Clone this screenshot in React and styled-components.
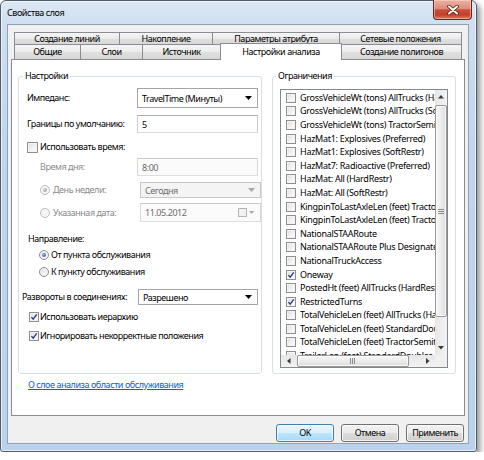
import React from 'react';
import styled, { createGlobalStyle } from 'styled-components';

const Global = createGlobalStyle`
  html, body { margin: 0; padding: 0; background: #fff; }
  body { font-family: "Noto Sans", sans-serif; font-size: 9px; letter-spacing: -0.45px; color: #000; }
`;

const Window = styled.div`
  box-sizing: border-box;
  width: 477px;
  height: 452px;
  border: 1px solid #4f5d6e;
  border-radius: 6px 6px 3px 3px;
  background: linear-gradient(180deg, #dde8f4 0px, #d0def0 24px, #c2d6ed 140px, #bcd2eb 100%);
  box-shadow: inset 0 0 0 1px rgba(255, 255, 255, 0.6), 3px 4px 6px rgba(0, 0, 0, 0.45);
  display: flex;
  flex-direction: column;
  padding: 0 7px 7px 6px;
`;

const TitleBar = styled.div`
  height: 23px;
  display: flex;
  align-items: flex-start;
  justify-content: space-between;
  flex: none;
`;

const Title = styled.div`
  margin-top: 6px;
  line-height: 12px;
  color: #000;
`;

const CloseBtn = styled.div`
  box-sizing: border-box;
  width: 39px;
  height: 20px;
  margin-top: -1px;
  margin-right: -3px;
  border: 1px solid #6a2316;
  border-top: none;
  border-radius: 0 0 4px 4px;
  background: linear-gradient(180deg, #eab2a5 0%, #dc8d7b 45%, #c8503b 52%, #c23f2a 78%, #de7b62 100%);
  box-shadow: inset 0 0 0 1px rgba(255, 220, 210, 0.5);
  display: flex;
  align-items: center;
  justify-content: center;
`;

const Client = styled.div`
  flex: 1;
  border: 1px solid #8ea3bb;
  background: #f0f0f0;
  padding: 7px 3px 0 3px;
  display: flex;
  flex-direction: column;
`;

const Tabs = styled.div`
  margin: 0 3px;
  display: flex;
  flex-direction: column;
`;

const TabRow = styled.div`
  display: flex;
  height: ${p => p.$h}px;
`;

const Tab = styled.div`
  box-sizing: border-box;
  position: relative;
  flex: none;
  width: ${p => p.$w}px;
  height: ${p => (p.$sel ? p.$h + 2 : p.$h)}px;
  margin-top: ${p => (p.$sel ? -1 : 0)}px;
  margin-left: ${p => (p.$first ? 0 : -1)}px;
  border: 1px solid #898c95;
  border-bottom: none;
  z-index: ${p => (p.$sel ? 2 : 1)};
  background: ${p => (p.$sel ? '#fff' : 'linear-gradient(180deg, #f5f5f5 0%, #ebebeb 50%, #dfdfdf 51%, #d8d8d8 100%)')};
  display: flex;
  align-items: center;
  justify-content: center;
  white-space: nowrap;
  line-height: 12px;
`;

const Panel = styled.div`
  box-sizing: border-box;
  height: 357px;
  flex: none;
  border: 1px solid #898c95;
  background: #fff;
  padding: 10px 0 0 6px;
  display: flex;
  flex-direction: column;
`;

const Groups = styled.div`
  display: flex;
  gap: 10px;
`;

const Fieldset = styled.fieldset`
  box-sizing: border-box;
  margin: 0;
  min-width: 0;
  width: ${p => p.$w}px;
  height: 304px;
  border: 1px solid #d5dfe5;
  border-radius: 3px;
  padding: ${p => p.$pad};
  display: flex;
  flex-direction: column;
`;

const Legend = styled.legend`
  padding: 0 2px;
  margin-left: -4px;
  line-height: 12px;
`;

const FormRow = styled.div`
  display: flex;
  align-items: center;
  flex: none;
  height: ${p => p.$h}px;
  margin-top: ${p => p.$mt}px;
  margin-left: ${p => p.$ml || 0}px;
  white-space: nowrap;
`;

const FieldLabel = styled.span`
  flex: none;
  width: ${p => p.$w}px;
  margin-left: ${p => p.$ml || 0}px;
  color: ${p => (p.$disabled ? '#8a8a8a' : '#000')};
  line-height: 12px;
`;

const Text = styled.span`
  color: ${p => (p.$disabled ? '#8a8a8a' : '#000')};
  margin-left: ${p => p.$ml || 0}px;
  line-height: 12px;
`;

const TextBox = styled.div`
  box-sizing: border-box;
  flex: none;
  width: ${p => p.$w || 121}px;
  height: 100%;
  border: 1px solid;
  border-color: ${p => (p.$disabled ? '#c9c9c9 #d9d9d9 #dedede #d9d9d9' : '#abadb3 #c9ccd2 #d6dae0 #c9ccd2')};
  background: ${p => (p.$disabled ? '#fbfbfb' : '#fff')};
  color: ${p => (p.$disabled ? '#6d6d6d' : '#000')};
  padding: 0 5px 0 4px;
  display: flex;
  align-items: center;
  justify-content: space-between;
`;

const SelectBox = styled.div`
  box-sizing: border-box;
  flex: none;
  width: ${p => p.$w || 121}px;
  height: 100%;
  border: 1px solid ${p => (p.$disabled ? '#c8c8c8' : '#a5a5a5')};
  background: ${p => (p.$disabled ? '#f4f4f4' : '#fff')};
  color: ${p => (p.$disabled ? '#6d6d6d' : '#000')};
  padding: 0 5px 0 4px;
  display: flex;
  align-items: center;
  justify-content: space-between;
`;

const BoxMark = styled.span`
  box-sizing: border-box;
  flex: none;
  width: ${p => p.$s}px;
  height: ${p => p.$s}px;
  border: 1px solid ${p => (p.$disabled ? '#bcbcbc' : '#8f8f8f')};
  border-radius: ${p => (p.$round ? '50%' : '0')};
  background: ${p => (p.$disabled ? '#f4f4f4' : 'linear-gradient(135deg, #dcdcdc 0%, #f2f2f2 55%, #ffffff 100%)')};
  box-shadow: inset 0 0 0 1px ${p => (p.$disabled ? '#f7f7f7' : '#f3f3f3')};
  display: flex;
  align-items: center;
  justify-content: center;
`;

const Dot = styled.span`
  width: 4px;
  height: 4px;
  border-radius: 50%;
  background: ${p => (p.$disabled ? 'radial-gradient(circle at 35% 35%, #d0d0d0, #9a9a9a)' : 'radial-gradient(circle at 35% 35%, #8ab4ea, #1d4d96)')};
`;

const LinkText = styled.a`
  margin: 5px 0 0 10px;
  line-height: 12px;
  color: #0066cc;
  text-decoration: underline;
  align-self: flex-start;
`;

const ListBox = styled.div`
  box-sizing: border-box;
  width: 168px;
  height: 279px;
  border: 1px solid #828790;
  background: #fff;
  display: grid;
  grid-template-columns: 154px 12px;
  grid-template-rows: 265px 12px;
  overflow: hidden;
`;

const Items = styled.div`
  overflow: hidden;
  padding-top: 1px;
  letter-spacing: -0.28px;
`;

const Item = styled.div`
  display: flex;
  align-items: center;
  height: 13.6px;
  padding-left: 5px;
  gap: 4px;
  white-space: nowrap;
  line-height: 12px;
`;

const VScroll = styled.div`
  display: flex;
  flex-direction: column;
  background: linear-gradient(90deg, #e6e6e6, #f3f3f3);
`;

const HScroll = styled.div`
  display: flex;
  background: linear-gradient(180deg, #e6e6e6, #f3f3f3);
`;

const Corner = styled.div`
  background: #f0f0f0;
`;

const Arrow = styled.div`
  flex: none;
  width: ${p => p.$w}px;
  height: ${p => p.$h}px;
  display: flex;
  align-items: center;
  justify-content: center;
`;

const Thumb = styled.div`
  box-sizing: border-box;
  flex: none;
  width: ${p => (p.$vert ? 'auto' : `${p.$len}px`)};
  height: ${p => (p.$vert ? `${p.$len}px` : 'auto')};
  margin: ${p => (p.$vert ? '1px 0 0 0' : '0 0 0 1px')};
  border: 1px solid #979797;
  border-radius: 2px;
  background: ${p => (p.$vert ? 'linear-gradient(90deg, #f7f7f7 0%, #ececec 50%, #dcdcdc 100%)' : 'linear-gradient(180deg, #f7f7f7 0%, #ececec 50%, #dcdcdc 100%)')};
  box-shadow: inset 0 0 0 1px rgba(255, 255, 255, 0.8);
  display: flex;
  align-items: center;
  justify-content: center;
`;

const Track = styled.div`
  flex: 1;
`;

const Buttons = styled.div`
  margin-top: 8px;
  padding-right: 1px;
  display: flex;
  justify-content: flex-end;
  gap: 7px;
`;

const Button = styled.div`
  box-sizing: border-box;
  width: ${p => p.$w}px;
  height: 18px;
  border: 1px solid ${p => (p.$default ? '#3c7fb1' : '#707070')};
  border-radius: 3px;
  background: ${p => (p.$default
    ? 'linear-gradient(180deg, #eaf6fd 0%, #d9f0fc 50%, #bee6fd 51%, #a7d9f5 100%)'
    : 'linear-gradient(180deg, #f2f2f2 0%, #ebebeb 50%, #dddddd 51%, #cfcfcf 100%)')};
  box-shadow: inset 0 0 0 1px rgba(255, 255, 255, 0.75);
  display: flex;
  align-items: center;
  justify-content: center;
  line-height: 12px;
`;

const DownArrow = ({ color = '#000' }) => (
  <svg width="7" height="4" viewBox="0 0 7 4"><path d="M0 0h7L3.5 4z" fill={color} /></svg>
);

const Tri = ({ dir }) => {
  const d = {
    up: 'M0 3.5h6L3 0z',
    down: 'M0 0h6L3 3.5z',
    left: 'M3.5 0v6L0 3z',
    right: 'M0 0v6L3.5 3z',
  }[dir];
  const w = dir === 'up' || dir === 'down' ? 6 : 4;
  const h = dir === 'up' || dir === 'down' ? 4 : 6;
  return <svg width={w} height={h} viewBox={`0 0 ${w} ${h}`}><path d={d} fill="#3a3a3a" /></svg>;
};

const Check = ({ s }) => (
  <svg width={s - 2} height={s - 2} viewBox="0 0 9 9">
    <path d="M1.6 4.6 L3.6 7 L7.6 1.6" fill="none" stroke="#23418a" strokeWidth="1.6" />
  </svg>
);

const CheckBox = ({ s = 11, checked, disabled }) => (
  <BoxMark $s={s} $disabled={disabled}>{checked && <Check s={s} />}</BoxMark>
);

const Radio = ({ checked, disabled }) => (
  <BoxMark $s={10} $round $disabled={disabled}>{checked && <Dot $disabled={disabled} />}</BoxMark>
);

const CalIcon = () => (
  <svg width="17" height="9" viewBox="0 0 17 9">
    <rect x="0.5" y="0.5" width="8" height="8" fill="#f2f2f2" stroke="#b5b5b5" />
    <path d="M11 3h5L13.5 6z" fill="#a8a8a8" />
  </svg>
);

const VGrip = () => (
  <svg width="6" height="5" viewBox="0 0 6 5">
    <path d="M0 0.5h6M0 2.5h6M0 4.5h6" stroke="#8a8a8a" strokeWidth="1" />
  </svg>
);

const HGrip = () => (
  <svg width="6" height="6" viewBox="0 0 6 6">
    <path d="M0.5 0v6M2.5 0v6M4.5 0v6" stroke="#8a8a8a" strokeWidth="1" />
  </svg>
);

const row1 = [
  ['Создание линий', 106],
  ['Накопление', 94],
  ['Параметры атрибута', 128],
  ['Сетевые положения', 123],
];
const row2 = [
  ['Общие', 67],
  ['Слои', 63],
  ['Источник', 79],
  ['Настройки анализа', 122, true],
  ['Создание полигонов', 121],
];

const items = [
  ['GrossVehicleWt (tons) AllTrucks (HardRestr)', false],
  ['GrossVehicleWt (tons) AllTrucks (SoftRestr)', false],
  ['GrossVehicleWt (tons) TractorSemitrailer', false],
  ['HazMat1: Explosives (Preferred)', false],
  ['HazMat1: Explosives (SoftRestr)', false],
  ['HazMat7: Radioactive (Preferred)', false],
  ['HazMat: All (HardRestr)', false],
  ['HazMat: All (SoftRestr)', false],
  ['KingpinToLastAxleLen (feet) TractorSemitrailer', false],
  ['KingpinToLastAxleLen (feet) TractorSemitrailer', false],
  ['NationalSTAARoute', false],
  ['NationalSTAARoute Plus Designated', false],
  ['NationalTruckAccess', false],
  ['Oneway', true],
  ['PostedHt (feet) AllTrucks (HardRestr)', false],
  ['RestrictedTurns', true],
  ['TotalVehicleLen (feet) AllTrucks (HardRestr)', false],
  ['TotalVehicleLen (feet) StandardDoubles', false],
  ['TotalVehicleLen (feet) TractorSemitrailer', false],
  ['TrailerLen (feet) StandardDoubles', false],
];

export default function App() {
  return (
    <>
      <Global />
      <Window>
        <TitleBar>
          <Title>Свойства слоя</Title>
          <CloseBtn>
            <svg width="12" height="10" viewBox="0 0 12 10">
              <path d="M2 1.5L10 8.5M10 1.5L2 8.5" stroke="#5b1a0f" strokeWidth="3.6" strokeLinecap="round" />
              <path d="M2 1.5L10 8.5M10 1.5L2 8.5" stroke="#fff" strokeWidth="2" strokeLinecap="round" />
            </svg>
          </CloseBtn>
        </TitleBar>
        <Client>
          <Tabs>
            <TabRow $h={12}>
              {row1.map(([t, w], i) => (
                <Tab key={t} $w={w} $h={12} $first={i === 0}>{t}</Tab>
              ))}
            </TabRow>
            <TabRow $h={15}>
              {row2.map(([t, w, sel], i) => (
                <Tab key={t} $w={w} $h={15} $sel={sel} $first={i === 0}>{t}</Tab>
              ))}
            </TabRow>
          </Tabs>
          <Panel>
            <Groups>
              <Fieldset $w={244} $pad="0 3px 0 8px">
                <Legend>Настройки</Legend>
                <FormRow $h={20} $mt={6}>
                  <FieldLabel $w={110}>Импеданс:</FieldLabel>
                  <SelectBox>TravelTime (Минуты)<DownArrow /></SelectBox>
                </FormRow>
                <FormRow $h={18} $mt={7}>
                  <FieldLabel $w={110}>Границы по умолчанию:</FieldLabel>
                  <TextBox>5</TextBox>
                </FormRow>
                <FormRow $h={12} $mt={8}>
                  <CheckBox />
                  <Text $ml={2}>Использовать время:</Text>
                </FormRow>
                <FormRow $h={18} $mt={5} $ml={13}>
                  <FieldLabel $w={97} $disabled>Время дня:</FieldLabel>
                  <TextBox $disabled>8:00</TextBox>
                </FormRow>
                <FormRow $h={16} $mt={6} $ml={13}>
                  <Radio checked disabled />
                  <FieldLabel $w={87} $ml={3} $disabled>День недели:</FieldLabel>
                  <SelectBox $disabled>Сегодня<DownArrow color="#a8a8a8" /></SelectBox>
                </FormRow>
                <FormRow $h={19} $mt={5} $ml={13}>
                  <Radio disabled />
                  <FieldLabel $w={87} $ml={3} $disabled>Указанная дата:</FieldLabel>
                  <TextBox $disabled>11.05.2012<CalIcon /></TextBox>
                </FormRow>
                <FormRow $h={13} $mt={10} $ml={1}>
                  <Text>Направление:</Text>
                </FormRow>
                <FormRow $h={12} $mt={4} $ml={12}>
                  <Radio checked />
                  <Text $ml={2}>От пункта обслуживания</Text>
                </FormRow>
                <FormRow $h={12} $mt={5} $ml={12}>
                  <Radio />
                  <Text $ml={2}>К пункту обслуживания</Text>
                </FormRow>
                <FormRow $h={16} $mt={11} $ml={-5}>
                  <FieldLabel $w={116}>Развороты в соединениях:</FieldLabel>
                  <SelectBox $w={120}>Разрешено<DownArrow /></SelectBox>
                </FormRow>
                <FormRow $h={12} $mt={6} $ml={2}>
                  <CheckBox s={10} checked />
                  <Text $ml={1}>Использовать иерархию</Text>
                </FormRow>
                <FormRow $h={12} $mt={7} $ml={2}>
                  <CheckBox s={10} checked />
                  <Text $ml={1}>Игнорировать некорректные положения</Text>
                </FormRow>
              </Fieldset>
              <Fieldset $w={184} $pad="7px 7px 0 7px">
                <Legend>Ограничения</Legend>
                <ListBox>
                  <Items>
                    {items.map(([t, c], i) => (
                      <Item key={i}>
                        <CheckBox s={10} checked={c} />
                        <span>{t}</span>
                      </Item>
                    ))}
                  </Items>
                  <VScroll>
                    <Arrow $w={12} $h={14}><Tri dir="up" /></Arrow>
                    <Thumb $vert $len={212}><VGrip /></Thumb>
                    <Track />
                    <Arrow $w={12} $h={14}><Tri dir="down" /></Arrow>
                  </VScroll>
                  <HScroll>
                    <Arrow $w={15} $h={12}><Tri dir="left" /></Arrow>
                    <Thumb $len={112}><HGrip /></Thumb>
                    <Track />
                    <Arrow $w={15} $h={12}><Tri dir="right" /></Arrow>
                  </HScroll>
                  <Corner />
                </ListBox>
              </Fieldset>
            </Groups>
            <LinkText href="#">О слое анализа области обслуживания</LinkText>
          </Panel>
          <Buttons>
            <Button $w={58} $default>OK</Button>
            <Button $w={58}>Отмена</Button>
            <Button $w={58}>Применить</Button>
          </Buttons>
        </Client>
      </Window>
    </>
  );
}
